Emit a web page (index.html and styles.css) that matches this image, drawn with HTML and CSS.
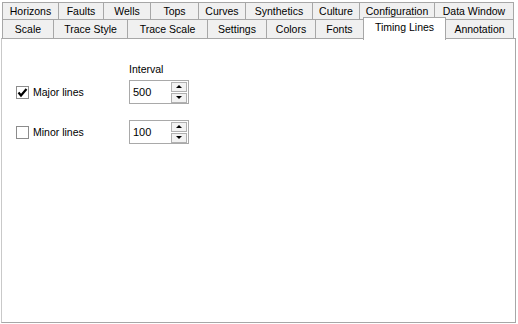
FILE: index.html
```html
<!DOCTYPE html>
<html lang="en">
<head>
    <meta charset="UTF-8">
    <title>Timing Lines</title>
    <link rel="stylesheet" href="styles.css">
</head>
<body>
    <div class="tabs">
        <div class="tab-row top-row">
            <div class="tab">Horizons</div>
            <div class="tab">Faults</div>
            <div class="tab">Wells</div>
            <div class="tab">Tops</div>
            <div class="tab">Curves</div>
            <div class="tab">Synthetics</div>
            <div class="tab">Culture</div>
            <div class="tab">Configuration</div>
            <div class="tab">Data Window</div>
        </div>
        <div class="tab-row front-row">
            <div class="tab">Scale</div>
            <div class="tab">Trace Style</div>
            <div class="tab">Trace Scale</div>
            <div class="tab">Settings</div>
            <div class="tab">Colors</div>
            <div class="tab">Fonts</div>
            <div class="tab active">Timing Lines</div>
            <div class="tab">Annotation</div>
        </div>

        <div class="panel">
            <div class="form-row head">
                <div></div>
                <div>Interval</div>
            </div>
            <div class="form-row">
                <label class="check"><span class="box">
                    <svg width="11" height="11" viewBox="0 0 11 11"><path d="M1.5 5.5 L4 8.5 L9.5 2" fill="none" stroke="#000" stroke-width="2.2"/></svg>
                </span>Major lines</label>
                <div class="spin"><span class="value">500</span>
                    <div class="arrows">
                        <span class="arrow up"></span>
                        <span class="arrow down"></span>
                    </div>
                </div>
            </div>
            <div class="form-row">
                <label class="check"><span class="box"></span>Minor lines</label>
                <div class="spin"><span class="value">100</span>
                    <div class="arrows">
                        <span class="arrow up"></span>
                        <span class="arrow down"></span>
                    </div>
                </div>
            </div>
        </div>
    </div>
</body>
</html>
```

FILE: styles.css
```css
body {
    margin: 0;
    background: #ffffff;
    font-family: "Liberation Sans", Arial, sans-serif;
    font-size: 10.5px;
    color: #000;
}

.tabs {
    width: 516px;
    height: 323px;
    padding-top: 2px;
    display: flex;
    flex-direction: column;
    box-sizing: border-box;
}

.tab-row {
    display: grid;
    margin-left: 2px;
}

.top-row {
    grid-template-columns: 56px 45px 47px 48px 47px 67px 47px 75px 80px;
    height: 17px;
}

.front-row {
    grid-template-columns: 51px 74px 80px 59px 49px 48px 83px 68px;
    height: 19px;
}

.tab {
    text-align: center;
    line-height: 17px;
    background: #f0f0f0;
    border: 1px solid #a7a7a7;
    border-bottom: none;
    border-right: none;
    white-space: nowrap;
    overflow: hidden;
}

.tab:last-child {
    border-right: 1px solid #a7a7a7;
}

.front-row .tab {
    line-height: 18px;
}

.tab.active {
    background: #fff;
    margin-top: -2px;
    height: 22px;
    line-height: 18px;
    border-right: 1px solid #a7a7a7;
    position: relative;
    z-index: 1;
}

.tab.active + .tab {
    border-left: none;
}

.panel {
    flex: 1;
    margin-left: 1px;
    border: 1px solid #a7a7a7;
    border-left-color: #c9c9c9;
    background: #fff;
    padding: 22px 0 0 14px;
    display: flex;
    flex-direction: column;
    gap: 16px;
}

.form-row {
    display: grid;
    grid-template-columns: 113px 60px;
    align-items: center;
    height: 24px;
}

.form-row.head {
    height: 16px;
    margin-bottom: -13px;
}

.check {
    display: flex;
    align-items: center;
    gap: 4px;
}

.box {
    width: 11px;
    height: 11px;
    border: 1px solid #8c8c8c;
    background: #fff;
    display: flex;
    align-items: center;
    justify-content: center;
}

.spin {
    height: 24px;
    box-sizing: border-box;
    border: 1px solid #a9a9a9;
    display: flex;
    align-items: center;
    justify-content: space-between;
    padding: 0 1px 0 3px;
}

.value {
    font-size: 11px;
}

.arrows {
    display: flex;
    flex-direction: column;
    gap: 1px;
}

.arrow {
    width: 14px;
    height: 8px;
    border: 1px solid #b0b0b0;
    background: #f2f2f2;
    display: flex;
    align-items: center;
    justify-content: center;
}

.arrow::after {
    content: "";
    border-left: 3px solid transparent;
    border-right: 3px solid transparent;
}

.arrow.up::after {
    border-bottom: 3px solid #000;
}

.arrow.down::after {
    border-top: 3px solid #000;
}
```
